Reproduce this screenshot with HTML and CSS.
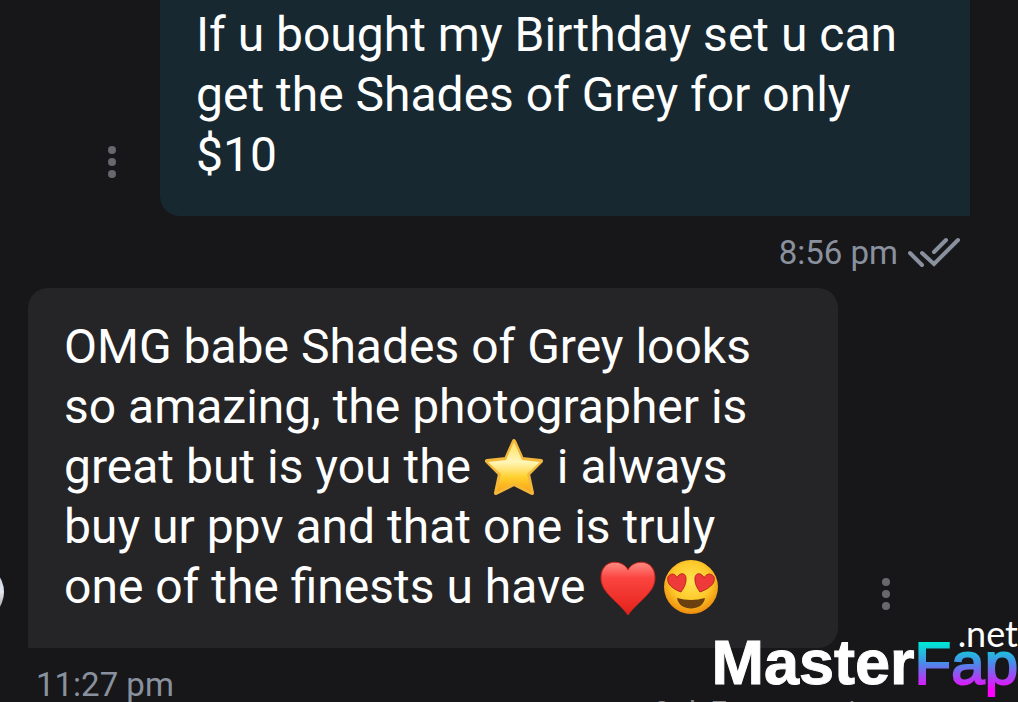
FILE: index.html
```html
<!DOCTYPE html>
<html lang="en">

<head>
    <meta charset="UTF-8">
    <meta name="viewport" content="width=device-width, initial-scale=1.0">
    <title>Chat</title>
    <link rel="stylesheet" href="styles.css">
</head>

<body>
    <main class="chat">
        <!-- Sent message -->
        <article class="message sent">
            <div class="row">
                <button class="menu" type="button" aria-label="Message options">
                    <svg width="12" height="34" viewBox="0 0 12 34"><circle cx="6" cy="4" r="4" /><circle cx="6" cy="16" r="4" /><circle cx="6" cy="28" r="4" /></svg>
                </button>
                <p class="bubble">If u bought my Birthday set u can get the Shades of Grey for only $10</p>
            </div>
            <div class="meta">
                <time>8:56 pm</time>
                <svg class="ticks" width="54" height="32" viewBox="0 0 54 32">
                    <path d="M2 17 L14 29 M14 17 L26 28 L50 4 M26 16 L38 4" />
                </svg>
            </div>
        </article>

        <!-- Received message -->
        <article class="message received">
            <div class="row">
                <span class="avatar"></span>
                <p class="bubble">OMG babe Shades of Grey looks so amazing, the photographer is great but is you the
                    <svg class="emoji" viewBox="0 0 60 60" role="img" aria-label="star">
                        <defs>
                            <linearGradient id="starFill" x1="0" y1="0" x2="0" y2="1">
                                <stop offset="0" stop-color="#ffdf62" />
                                <stop offset="0.4" stop-color="#fff6b8" />
                                <stop offset="0.7" stop-color="#ffd02f" />
                                <stop offset="1" stop-color="#f8a414" />
                            </linearGradient>
                        </defs>
                        <path d="M30 3 L38 21 L57 23 L44 36 L48 55 L30 46 L12 55 L16 36 L3 23 L22 21 Z" fill="url(#starFill)" stroke="#f3b73c" stroke-width="4" stroke-linejoin="round" />
                        <path d="M30 4 L38 22 L56 24 L43 36 L47 54 L30 45 L13 54 L17 36 L4 24 L22 22 Z" fill="url(#starFill)" />
                    </svg>
                    i always buy ur ppv and that one is truly one of the finests u have
                    <span class="emoji-group"><svg class="emoji" viewBox="0 0 60 60" role="img" aria-label="red heart">
                        <defs>
                            <linearGradient id="heartFill" x1="0" y1="0" x2="0" y2="1">
                                <stop offset="0" stop-color="#ff8d84" />
                                <stop offset="0.3" stop-color="#fb4440" />
                                <stop offset="1" stop-color="#e32219" />
                            </linearGradient>
                        </defs>
                        <path d="M30 12 C25 1 3 0 3 20 C3 35 20 43 30 57 C40 43 57 35 57 20 C57 0 35 1 30 12 Z" fill="url(#heartFill)" stroke="#c9241d" stroke-width="1" />
                    </svg><svg class="emoji" viewBox="0 0 60 60" role="img" aria-label="heart eyes">
                        <defs>
                            <radialGradient id="faceFill" cx="0.5" cy="0.4" r="0.6">
                                <stop offset="0" stop-color="#ffe352" />
                                <stop offset="0.6" stop-color="#fdc92b" />
                                <stop offset="1" stop-color="#ee8b0b" />
                            </radialGradient>
                        </defs>
                        <circle cx="31" cy="29" r="27" fill="url(#faceFill)" />
                        <path d="M21 34 C13 31 6 26 8 19 C11 14 16 16 17 20 C19 14 27 14 26 22 C26 27 23 31 21 34 Z" fill="#ef3a3a" stroke="#b9281b" stroke-width="1" />
                        <path d="M40 34 C48 31 56 26 54 19 C51 14 46 16 44 20 C42 14 34 14 35 22 C35 27 38 31 40 34 Z" fill="#ef3a3a" stroke="#b9281b" stroke-width="1" />
                        <path d="M17 40 Q31 44 45 40 C43 54 19 54 17 40 Z" fill="#6b4011" />
                    </svg></span>
                </p>
                <button class="menu" type="button" aria-label="Message options">
                    <svg width="12" height="34" viewBox="0 0 12 34"><circle cx="6" cy="4" r="4" /><circle cx="6" cy="16" r="4" /><circle cx="6" cy="28" r="4" /></svg>
                </button>
            </div>
            <div class="meta">
                <time>11:27 pm</time>
            </div>
        </article>
    </main>

    <!-- Watermarks over the conversation -->
    <div class="source">OnlyFans.com/</div>
    <div class="watermark">
        <span class="master">Master</span><span class="fap">Fap</span>
        <span class="net">.net</span>
    </div>
</body>

</html>
```
FILE: styles.css
```css
* {
    box-sizing: border-box;
}

body {
    margin: 0;
    height: 100vh;
    overflow: hidden;
    position: relative;
    background: #17171a;
    color: #fff;
    font-family: Roboto, sans-serif;
}

/* Conversation */
.chat {
    display: flex;
    flex-direction: column;
}

.row {
    display: flex;
    align-items: flex-end;
}

.bubble {
    flex: 1;
    margin: 0;
    padding: 29px 36px 31px;
    font-size: 48px;
    line-height: 60px;
}

.sent .row {
    padding: 0 48px 0 96px;
}

.sent .bubble {
    padding-top: 5px;
    background: #172830;
    border-radius: 0 0 0 20px;
}

.received .row {
    padding-right: 116px;
}

.received .bubble {
    background: #252527;
    border-radius: 20px 20px 20px 0;
}

/* Three dot button */
.menu {
    width: 32px;
    margin: 0 32px 36px 0;
    padding: 0;
    border: 0;
    background: none;
    line-height: 0;
}

.received .menu {
    margin: 0 0 36px 32px;
}

.menu svg {
    fill: #66686d;
}

/* Only the edge of the avatar is in view */
.avatar {
    width: 56px;
    height: 56px;
    margin: 0 24px 28px -52px;
    border-radius: 50%;
    background: linear-gradient(#b9c3d4, #e3e7ee 50%, #8a7468);
}

/* Time line */
.meta {
    display: flex;
    align-items: center;
    gap: 10px;
    height: 72px;
    padding: 0 36px;
    color: #8a919e;
    font-size: 33px;
}

.sent .meta {
    justify-content: flex-end;
    padding-right: 56px;
}

.ticks {
    fill: none;
    stroke: #8a919e;
    stroke-width: 4;
    stroke-linecap: round;
}

/* Emoji */
.emoji {
    width: 62px;
    height: 60px;
    margin: -4px 0;
    vertical-align: -11px;
}

.emoji-group {
    white-space: nowrap;
}

/* Watermarks */
.source {
    position: absolute;
    left: 64%;
    bottom: -28px;
    color: #85858a;
    font-size: 30px;
    line-height: 36px;
}

.watermark {
    position: absolute;
    right: 0;
    bottom: 2px;
    font-family: "Liberation Sans", Arial, sans-serif;
    font-size: 63px;
    line-height: 72px;
    white-space: nowrap;
}

.master {
    font-weight: bold;
    -webkit-text-stroke: 1px #fff;
}

.fap {
    background: linear-gradient(#00e5d5 20%, #4a8ae8 50%, #f0f 90%);
    -webkit-background-clip: text;
    background-clip: text;
    color: transparent;
    font-size: 60px;
    -webkit-text-stroke: 2px transparent;
}

.net {
    position: absolute;
    right: 0;
    top: -9px;
    font-family: Lato, sans-serif;
    font-size: 36px;
    line-height: 32px;
}
```
